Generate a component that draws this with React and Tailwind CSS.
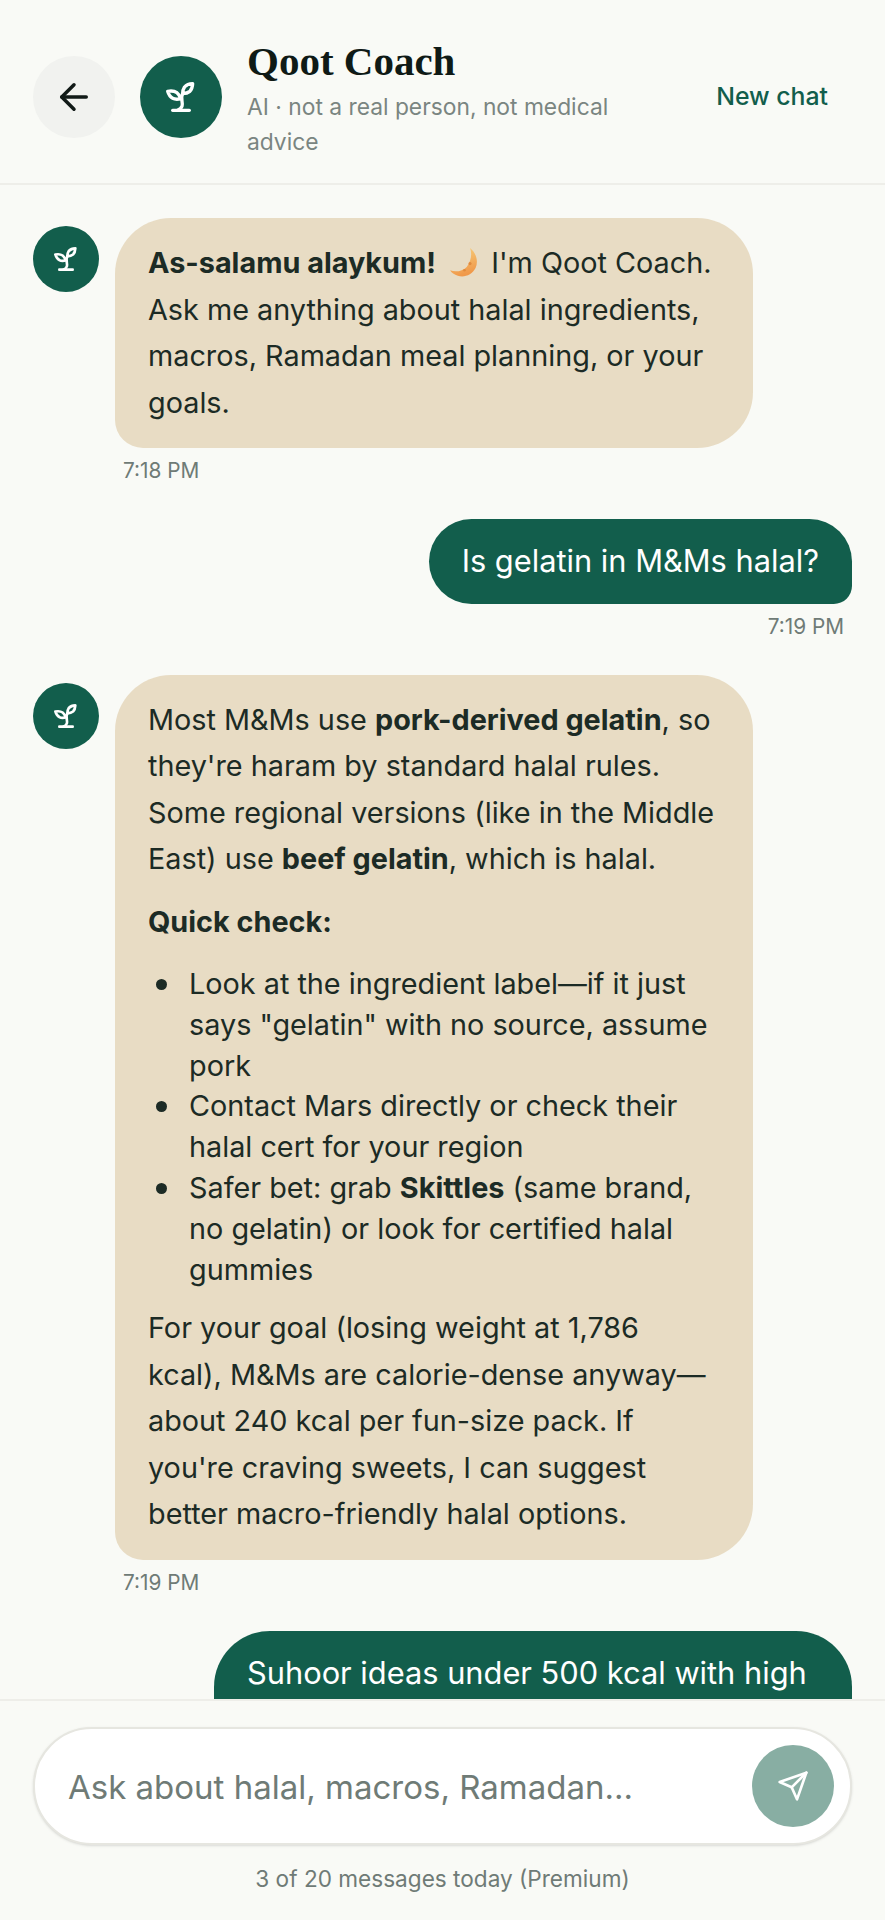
import React from "react";

function SproutIcon({ size, strokeWidth }) {
  return (
    <svg width={size} height={size} viewBox="0 0 24 24" fill="none" stroke="#fff" strokeWidth={strokeWidth} strokeLinecap="round" strokeLinejoin="round">
      <path d="M7 20h10" />
      <path d="M10 20c5.5-2.5.8-6.4 3-10" />
      <path d="M9.5 9.4c1.1.8 1.8 2.2 2.3 3.7-2 .4-3.5.4-4.8-.3-1.2-.6-2.3-1.9-3-4.2 2.8-.5 4.4 0 5.5.8z" />
      <path d="M14.1 6a7 7 0 0 0-1.1 4c1.9-.1 3.3-.6 4.3-1.4 1-1 1.6-2.3 1.7-4.6-2.7.1-4 1-4.9 2z" />
    </svg>
  );
}

function Moon() {
  return (
    <svg viewBox="0 0 28 28" className="inline-block w-[31px] h-[31px] align-[-5px] ml-[5px] mr-[3px]">
      <defs>
        <linearGradient id="m" x1="0" y1="0" x2="0.3" y2="1">
          <stop offset="0" stopColor="#f7d27e" />
          <stop offset="1" stopColor="#f0994a" />
        </linearGradient>
      </defs>
      <path d="M19 1c5 4 8 11 5 18-3 6-10 9-16 7-3-1-6-3-7-5 5 2 11 1 15-3 4-5 5-12 3-17z" fill="url(#m)" />
      <circle cx="19" cy="15" r="1.4" fill="#e08a3e" />
      <circle cx="14" cy="21" r="1.2" fill="#e08a3e" />
    </svg>
  );
}

function Avatar() {
  return (
    <div className="w-[66px] h-[66px] rounded-full bg-[#125e4c] flex items-center justify-center shrink-0 mt-[8px]">
      <SproutIcon size={32} strokeWidth={2} />
    </div>
  );
}

function Coach({ children, time }) {
  return (
    <div className="flex gap-[16px] items-start">
      <Avatar />
      <div className="w-[638px]">
        <div className="bg-[#e8dcc4] rounded-[56px] rounded-bl-[28px] px-[33px] py-[22px] text-[#1c2b25] text-[28.8px] leading-[46.5px]">
          {children}
        </div>
        <div className="mt-[9px] ml-[8px] text-[20.8px] leading-[28px] text-[#6f7b76]">{time}</div>
      </div>
    </div>
  );
}

function Item({ children }) {
  return (
    <li className="flex">
      <span className="w-[11px] h-[11px] rounded-full bg-[#1c2b25] shrink-0 mt-[15px] -ml-[33px] mr-[22px]" />
      <span>{children}</span>
    </li>
  );
}

export default function App() {
  return (
    <div className="h-[1920px] w-[885px] overflow-hidden bg-[#f9faf6] flex flex-col font-['Inter',sans-serif]">
      <header className="h-[185px] shrink-0 border-b-2 border-[#eeeee9] flex items-center pt-[10px] pl-[33px] pr-[57px]">
        <button className="w-[82px] h-[82px] rounded-full bg-[#f1f2ef] flex items-center justify-center shrink-0">
          <svg width="42" height="42" viewBox="0 0 24 24" fill="none" stroke="#111a17" strokeWidth="2" strokeLinecap="round" strokeLinejoin="round">
            <path d="m12 19-7-7 7-7" />
            <path d="M19 12H5" />
          </svg>
        </button>
        <div className="w-[82px] h-[82px] ml-[25px] rounded-full bg-[#125e4c] flex items-center justify-center shrink-0">
          <SproutIcon size={40} strokeWidth={2} />
        </div>
        <div className="ml-[25px] w-[400px] pt-[4px]">
          <div className="font-['Liberation_Serif',serif] font-bold text-[41px] leading-[46px] text-[#0f1a16] mb-[5px]">Qoot Coach</div>
          <div className="text-[22.8px] leading-[35.5px] text-[#7a8581]">AI · not a real person, not medical advice</div>
        </div>
        <button className="ml-auto text-[24.8px] font-medium text-[#125e4c]">New chat</button>
      </header>

      <main className="flex-1 min-h-0 overflow-hidden px-[33px] pt-[33px] flex flex-col gap-[34px]">
        <Coach time="7:18 PM">
          <p><strong className="font-bold">As-salamu alaykum!</strong> <Moon /> I'm Qoot Coach. Ask me anything about halal ingredients, macros, Ramadan meal planning, or your goals.</p>
        </Coach>

        <div className="flex flex-col items-end">
          <div className="bg-[#125e4c] text-white rounded-[56px] rounded-br-[24px] px-[33px] py-[19px] text-[30.8px] leading-[46.5px]">Is gelatin in M&amp;Ms halal?</div>
          <div className="mt-[9px] mr-[8px] text-[20.8px] leading-[28px] text-[#6f7b76]">7:19 PM</div>
        </div>

        <Coach time="7:19 PM">
          <p>Most M&amp;Ms use <strong>pork-derived gelatin</strong>, so they're haram by standard halal rules. Some regional versions (like in the Middle East) use <strong>beef gelatin</strong>, which is halal.</p>
          <p className="mt-[16px]"><strong>Quick check:</strong></p>
          <ul className="mt-[19px] pl-[41px] leading-[40.8px]">
            <Item>Look at the ingredient label—if it just says "gelatin" with no source, assume pork</Item>
            <Item>Contact Mars directly or check their halal cert for your region</Item>
            <Item>Safer bet: grab <strong>Skittles</strong> (same brand, no gelatin) or look for certified halal gummies</Item>
          </ul>
          <p className="mt-[15px]">For your goal (losing weight at 1,786 kcal), M&amp;Ms are calorie-dense anyway—about 240 kcal per fun-size pack. If you're craving sweets, I can suggest better macro-friendly halal options.</p>
        </Coach>

        <div className="flex flex-col items-end">
          <div className="w-[638px] bg-[#125e4c] text-white rounded-[56px] rounded-br-[24px] px-[33px] py-[19px] text-[30.8px] leading-[46.5px] shrink-0">Suhoor ideas under 500 kcal with high protein please</div>
        </div>
      </main>

      <footer className="h-[221px] shrink-0 border-t-2 border-[#eeeee9] px-[33px] pt-[26px]">
        <div className="h-[118px] rounded-full bg-white border-2 border-[#e6e6e0] shadow-sm flex items-center pl-[33px] pr-[16px]">
          <span className="text-[33px] pt-[4px] text-[#6f7b76]">Ask about halal, macros, Ramadan...</span>
          <button className="ml-auto w-[82px] h-[82px] rounded-full bg-[#88aea3] flex items-center justify-center">
            <svg width="32" height="32" viewBox="0 0 24 24" fill="none" stroke="#fff" strokeWidth="2" strokeLinecap="round" strokeLinejoin="round">
              <path d="m22 2-7 20-4-9-9-4Z" />
              <path d="M22 2 11 13" />
            </svg>
          </button>
        </div>
        <div className="mt-[19px] text-center text-[22.6px] leading-[30px] text-[#6f7b76]">3 of 20 messages today (Premium)</div>
      </footer>
    </div>
  );
}
